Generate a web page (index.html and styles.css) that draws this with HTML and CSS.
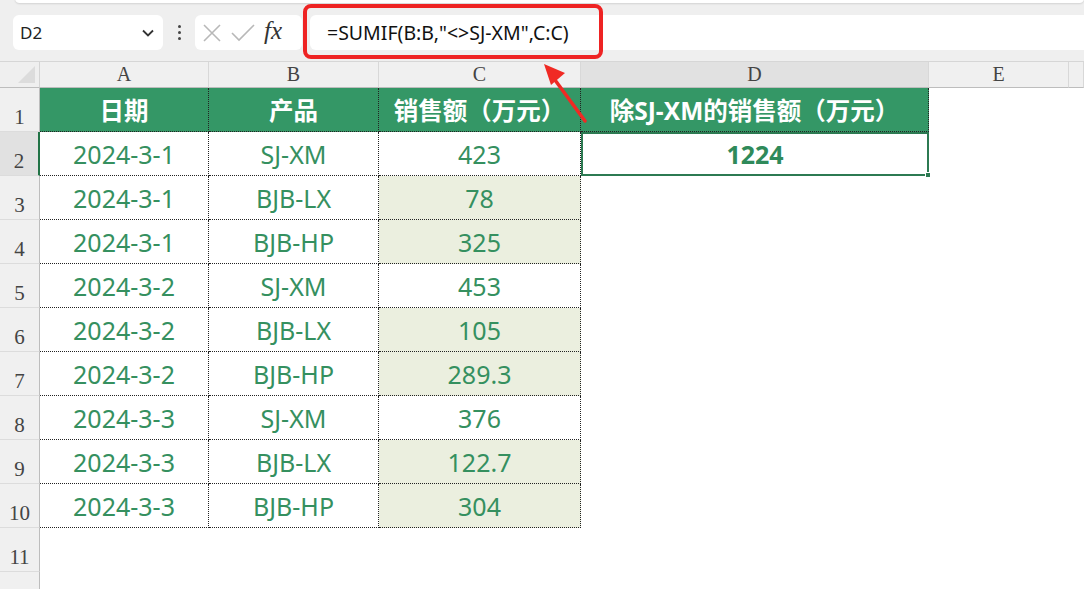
FILE: index.html
```html
<!DOCTYPE html>
<html lang="zh-CN">
  <head>
    <meta charset="UTF-8" />
    <title>SUMIF</title>
    <link rel="stylesheet" href="styles.css">
  </head>
  <body>
    <!-- FORMULA BAR -->
    <div class="toolbar">
      <div class="top-edge"></div>
      <div class="bar-row">
        <div class="name-box">
          <span>D2</span>
          <svg class="chevron" width="14" height="10" viewBox="0 0 14 10">
            <path d="M2 2.5 L7 7.5 L12 2.5" fill="none" stroke="#333" stroke-width="1.8"/>
          </svg>
        </div>
        <div class="dots">
          <i></i><i></i><i></i>
        </div>
        <div class="fx-box">
          <svg width="22" height="22" viewBox="0 0 22 22">
            <path d="M3 3 L19 19 M19 3 L3 19" stroke="#b8b8b8" stroke-width="1.6"/>
          </svg>
          <svg width="26" height="22" viewBox="0 0 26 22">
            <path d="M2 11 L9 18 L24 3" fill="none" stroke="#b8b8b8" stroke-width="1.6"/>
          </svg>
          <span class="fx">fx</span>
        </div>
        <div class="formula">=SUMIF(B:B,"&lt;&gt;SJ-XM",C:C)</div>
      </div>
      <div class="highlight"></div>
    </div>

    <!-- GRID -->
    <div class="sheet">
      <div class="corner"><span></span></div>
      <div class="col-head">A</div>
      <div class="col-head">B</div>
      <div class="col-head">C</div>
      <div class="col-head active">D</div>
      <div class="col-head">E</div>
      <div class="col-head"></div>

      <div class="row-head">1</div>
      <div class="cell head">日期</div>
      <div class="cell head">产品</div>
      <div class="cell head">销售额（万元）</div>
      <div class="cell head">除SJ-XM的销售额（万元）</div>
      <div class="blank"></div>
      <div class="blank"></div>

      <div class="row-head active">2</div>
      <div class="cell">2024-3-1</div>
      <div class="cell">SJ-XM</div>
      <div class="cell">423</div>
      <div class="cell result">1224<span class="handle"></span></div>
      <div class="blank"></div>
      <div class="blank"></div>

      <div class="row-head">3</div>
      <div class="cell">2024-3-1</div>
      <div class="cell">BJB-LX</div>
      <div class="cell tint">78</div>
      <div class="blank"></div>
      <div class="blank"></div>
      <div class="blank"></div>

      <div class="row-head">4</div>
      <div class="cell">2024-3-1</div>
      <div class="cell">BJB-HP</div>
      <div class="cell tint">325</div>
      <div class="blank"></div>
      <div class="blank"></div>
      <div class="blank"></div>

      <div class="row-head">5</div>
      <div class="cell">2024-3-2</div>
      <div class="cell">SJ-XM</div>
      <div class="cell">453</div>
      <div class="blank"></div>
      <div class="blank"></div>
      <div class="blank"></div>

      <div class="row-head">6</div>
      <div class="cell">2024-3-2</div>
      <div class="cell">BJB-LX</div>
      <div class="cell tint">105</div>
      <div class="blank"></div>
      <div class="blank"></div>
      <div class="blank"></div>

      <div class="row-head">7</div>
      <div class="cell">2024-3-2</div>
      <div class="cell">BJB-HP</div>
      <div class="cell tint">289.3</div>
      <div class="blank"></div>
      <div class="blank"></div>
      <div class="blank"></div>

      <div class="row-head">8</div>
      <div class="cell">2024-3-3</div>
      <div class="cell">SJ-XM</div>
      <div class="cell">376</div>
      <div class="blank"></div>
      <div class="blank"></div>
      <div class="blank"></div>

      <div class="row-head">9</div>
      <div class="cell">2024-3-3</div>
      <div class="cell">BJB-LX</div>
      <div class="cell tint">122.7</div>
      <div class="blank"></div>
      <div class="blank"></div>
      <div class="blank"></div>

      <div class="row-head">10</div>
      <div class="cell">2024-3-3</div>
      <div class="cell">BJB-HP</div>
      <div class="cell tint">304</div>
      <div class="blank"></div>
      <div class="blank"></div>
      <div class="blank"></div>

      <div class="row-head">11</div>
      <div class="blank"></div>
      <div class="blank"></div>
      <div class="blank"></div>
      <div class="blank"></div>
      <div class="blank"></div>
      <div class="blank"></div>

      <div class="row-head"></div>
    </div>

    <!-- annotation arrow -->
    <svg class="arrow" width="60" height="70" viewBox="0 0 60 70">
      <path d="M44 60 L14 19" stroke="#f02a24" stroke-width="3.5" stroke-linecap="round"/>
      <path d="M3 3 L24 12 L10 24 Z" fill="#f02a24"/>
    </svg>
  </body>
</html>
```

FILE: styles.css
```css
* {
  box-sizing: border-box;
}

body {
  margin: 0;
  width: 1084px;
  height: 589px;
  overflow: hidden;
  position: relative;
  background: #fff;
  font-family: "Noto Sans", "Noto Sans CJK SC", sans-serif;
}

/* Formula bar */
.toolbar {
  position: relative;
  height: 62px;
  background: #efefef;
  border-bottom: 1px solid #d6d6d6;
}

.top-edge {
  position: absolute;
  left: 15px;
  right: 0;
  top: -6px;
  height: 9px;
  background: #fff;
  border-radius: 6px;
  box-shadow: 0 1px 2px rgba(0, 0, 0, 0.12);
}

.bar-row {
  display: flex;
  align-items: center;
  padding: 15px 0 0 13px;
  height: 50px;
}

.name-box {
  width: 150px;
  height: 35px;
  background: #fff;
  border-radius: 6px;
  display: flex;
  align-items: center;
  justify-content: space-between;
  padding: 0 8px 0 7px;
  font-size: 17px;
  color: #222;
}

.dots {
  width: 32px;
  display: flex;
  flex-direction: column;
  align-items: center;
  gap: 3px;
}

.dots i {
  width: 3px;
  height: 3px;
  background: #444;
  border-radius: 50%;
}

.fx-box {
  width: 107px;
  height: 35px;
  background: #fff;
  border-radius: 6px;
  display: flex;
  align-items: center;
  gap: 7px;
  padding-left: 6px;
}

.fx {
  font-family: "Liberation Serif", serif;
  font-style: italic;
  font-size: 25px;
  color: #333;
  margin-left: 1px;
  margin-top: -3px;
}

.formula {
  flex: 1;
  height: 35px;
  margin-left: 8px;
  background: #fff;
  border-radius: 6px 0 0 6px;
  display: flex;
  align-items: center;
  padding-left: 17px;
  font-size: 19.5px;
  color: #111;
}

.highlight {
  position: absolute;
  left: 303px;
  top: 4px;
  width: 300px;
  height: 55px;
  border: 4px solid #ee2323;
  border-radius: 8px;
}

/* Sheet grid */
.sheet {
  display: grid;
  grid-template-columns: 40px 169px 170px 202px 348px 140px 1fr;
  grid-template-rows: 26px repeat(12, 44px);
}

.corner {
  background: #efefef;
  border-right: 1px solid #d4d4d4;
  border-bottom: 1px solid #bdbdbd;
  position: relative;
}

.corner span {
  position: absolute;
  right: 4px;
  bottom: 4px;
  width: 0;
  height: 0;
  border-left: 17px solid transparent;
  border-bottom: 17px solid #dcdcdc;
}

.col-head {
  background: #f0f0f0;
  border-right: 1px solid #d8d8d8;
  border-bottom: 1px solid #bdbdbd;
  display: flex;
  align-items: center;
  justify-content: center;
  font-family: "Liberation Serif", serif;
  font-size: 20px;
  color: #444;
}

.col-head.active {
  background: #e1e1e1;
}

.row-head {
  background: #f0f0f0;
  border-right: 1px solid #bdbdbd;
  border-bottom: 1px solid #dcdcdc;
  display: flex;
  align-items: flex-end;
  justify-content: center;
  padding-bottom: 1px;
  font-family: "Liberation Serif", serif;
  font-size: 21px;
  color: #444;
}

.row-head.active {
  background: #e1e1e1;
  border-right: 2px solid #217346;
}

.cell {
  display: flex;
  align-items: center;
  justify-content: center;
  font-size: 25px;
  color: #35905f;
  border-right: 1px dotted #222;
  border-bottom: 1px dotted #222;
  white-space: nowrap;
}

.cell.head {
  background: #349766;
  color: #fff;
  font-weight: 700;
  font-size: 24.5px;
}

.cell.tint {
  background: #ebefdf;
}

.cell.result {
  position: relative;
  font-weight: 700;
  color: #2f8a5a;
  border: 2px solid #2c7a52;
}

.handle {
  position: absolute;
  right: -4px;
  bottom: -4px;
  width: 6px;
  height: 6px;
  background: #2c7a52;
  border: 1px solid #fff;
}

.blank {
  background: #fff;
}

.arrow {
  position: absolute;
  left: 541px;
  top: 61px;
}
```
